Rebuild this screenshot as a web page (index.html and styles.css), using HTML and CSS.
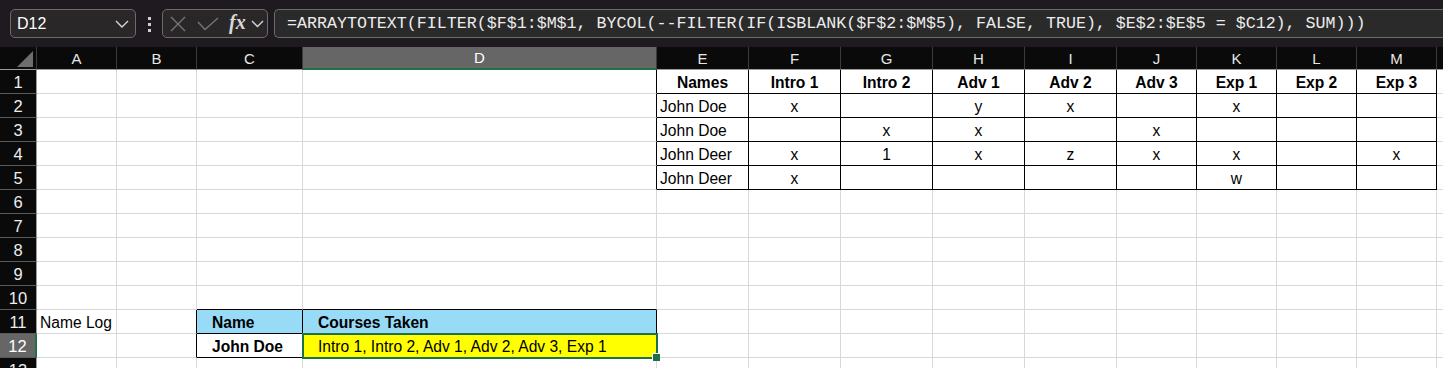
FILE: index.html
```html
<!DOCTYPE html>
<html lang="en">
<head>
    <meta charset="UTF-8">
    <title>Name Log</title>
    <link rel="stylesheet" href="styles.css">
</head>
<body>

    <div class="toolbar">
        <div class="namebox">
            <span>D12</span>
            <svg width="14" height="8" viewBox="0 0 14 8"><polyline points="1,1 7,7 13,1" fill="none" stroke="#d8d8d8" stroke-width="1.4"/></svg>
        </div>
        <div class="dots"><span></span><span></span><span></span></div>
        <div class="fnbox">
            <svg class="ico-x" width="16" height="16" viewBox="0 0 16 16"><path d="M1 1L15 15M15 1L1 15" stroke="#767676" stroke-width="1.4"/></svg>
            <svg class="ico-ok" width="22" height="14" viewBox="0 0 22 14"><polyline points="1,5 8,12.5 21,1" fill="none" stroke="#767676" stroke-width="1.4"/></svg>
            <span class="fx">fx</span>
            <svg width="13" height="8" viewBox="0 0 13 8"><polyline points="1,1 6.5,6.5 12,1" fill="none" stroke="#d8d8d8" stroke-width="1.4"/></svg>
        </div>
        <div class="formula">=ARRAYTOTEXT(FILTER($F$1:$M$1, BYCOL(--FILTER(IF(ISBLANK($F$2:$M$5), FALSE, TRUE), $E$2:$E$5 = $C12), SUM)))</div>
    </div>

    <div class="sheet" id="hoja"></div>

    <script>
        const letras = ["A", "B", "C", "D", "E", "F", "G", "H", "I", "J", "K", "L", "M", ""];
        const valores = {
            E1: "Names", F1: "Intro 1", G1: "Intro 2", H1: "Adv 1", I1: "Adv 2", J1: "Adv 3", K1: "Exp 1", L1: "Exp 2", M1: "Exp 3",
            E2: "John Doe", F2: "x", H2: "y", I2: "x", K2: "x",
            E3: "John Doe", G3: "x", H3: "x", J3: "x",
            E4: "John Deer", F4: "x", G4: "1", H4: "x", I4: "z", J4: "x", K4: "x", M4: "x",
            E5: "John Deer", F5: "x", K5: "w",
            A11: "Name Log", C11: "Name", D11: "Courses Taken",
            C12: "John Doe", D12: "Intro 1, Intro 2, Adv 1, Adv 2, Adv 3, Exp 1"
        };

        function clases(i, fila) {
            const lista = ["cell"];
            // tabla de cursos E1:M5
            if (fila >= 1 && fila <= 5) {
                if (i >= 4 && i <= 12) {
                    lista.push("box");
                    if (fila === 1) lista.push("bold", "center");
                    else if (i > 4) lista.push("center");
                }
                if (i === 3) lista.push("edge-r");
            }
            // tabla de registro C11:D12
            if (fila === 10 && (i === 2 || i === 3)) lista.push("edge-b");
            if (fila === 11 || fila === 12) {
                if (i === 1) lista.push("edge-r");
                if (i === 2 || i === 3) lista.push("box", "ind");
                if (fila === 11 && (i === 2 || i === 3)) lista.push("blue", "bold");
                if (fila === 12 && i === 2) lista.push("bold");
                if (fila === 12 && i === 3) lista.push("yellow", "sel");
            }
            return lista.join(" ");
        }

        function dibujarHoja() {
            const hoja = document.getElementById("hoja");
            let html = `<div class="colhead corner"></div>`;
            letras.forEach(l => {
                html += `<div class="colhead ${l === "D" ? "sel-col" : ""}">${l}</div>`;
            });
            for (let fila = 1; fila <= 13; fila++) {
                html += `<div class="rowhead ${fila === 12 ? "sel-row" : ""}">${fila}</div>`;
                letras.forEach((l, i) => {
                    const texto = valores[l + fila] || "";
                    html += `<div class="${clases(i, fila)}">${texto}</div>`;
                });
            }
            hoja.innerHTML = html;
        }

        dibujarHoja();
    </script>

</body>
</html>
```

FILE: styles.css
```css
* {
    box-sizing: border-box;
}
body {
    margin: 0;
    background-color: #fff;
    font-family: "Liberation Sans", Arial, sans-serif;
    overflow: hidden;
}
.toolbar {
    height: 47px;
    background-color: #1f1a1f;
    display: flex;
    align-items: flex-start;
    padding: 9px 0 0 10px;
}
.namebox {
    width: 126px;
    height: 29px;
    border: 1px solid #6b6b6b;
    border-radius: 5px;
    background-color: #2a2729;
    display: flex;
    align-items: center;
    justify-content: space-between;
    padding: 0 6px 0 6px;
    color: #fff;
    font-size: 16px;
}
.dots {
    margin-left: 12px;
    width: 4px;
    display: flex;
    flex-direction: column;
    gap: 3px;
    padding-top: 8px;
}
.dots span {
    width: 3px;
    height: 3px;
    background-color: #cfcfcf;
}
.fnbox {
    margin-left: 10px;
    width: 106px;
    height: 29px;
    border: 1px solid #6b6b6b;
    border-radius: 5px;
    background-color: #2a2729;
    display: flex;
    align-items: center;
    padding-left: 7px;
}
.ico-x {
    margin-right: 11px;
}
.ico-ok {
    margin-right: 10px;
}
.fx {
    font-family: "Liberation Serif", serif;
    font-style: italic;
    font-weight: bold;
    font-size: 20px;
    color: #d8d8d8;
    margin-right: 5px;
    margin-top: -3px;
}
.formula {
    margin-left: 6px;
    flex: 1;
    height: 29px;
    border: 1px solid #6b6b6b;
    border-right: none;
    border-radius: 5px 0 0 5px;
    background-color: #2a2a2a;
    padding-left: 12px;
    font-family: "Liberation Mono", monospace;
    font-size: 16.65px;
    line-height: 27px;
    color: #ececec;
    white-space: nowrap;
    overflow: hidden;
}
.sheet {
    display: grid;
    grid-template-columns: 37px 80px 80px 106px 354px 92px 92px 92px 92px 92px 80px 80px 80px 80px 1fr;
    grid-template-rows: 23px;
    grid-auto-rows: 24px;
}
.colhead {
    background-color: #0a0a0a;
    color: #e6e6e6;
    border-right: 1px solid #3c3c3c;
    border-bottom: 1px solid #9c9c9c;
    display: flex;
    align-items: center;
    justify-content: center;
    font-size: 15px;
}
.corner {
    position: relative;
}
.corner::after {
    content: "";
    position: absolute;
    right: 3px;
    bottom: 2px;
    width: 16px;
    height: 16px;
    background-color: #6e6e6e;
    clip-path: polygon(100% 0, 100% 100%, 0 100%);
}
.sel-col {
    background-color: #666;
    color: #fff;
    border-bottom: 2px solid #1e7145;
}
.rowhead {
    background-color: #0a0a0a;
    color: #eee;
    border-right: 1px solid #9c9c9c;
    border-bottom: 1px solid #5a5a5a;
    display: flex;
    align-items: center;
    justify-content: center;
    font-size: 16.5px;
    padding-top: 1px;
}
.sel-row {
    background-color: #666;
    color: #fff;
    border-right: 2px solid #1e7145;
}
.cell {
    border-right: 1px solid #d9d9d9;
    border-bottom: 1px solid #d9d9d9;
    display: flex;
    align-items: center;
    padding: 2px 3px 0 3px;
    font-size: 15.6px;
    color: #000;
    white-space: nowrap;
    overflow: hidden;
}
.box {
    border-right-color: #000;
    border-bottom-color: #000;
}
.edge-r {
    border-right-color: #000;
}
.edge-b {
    border-bottom-color: #000;
}
.center {
    justify-content: center;
}
.bold {
    font-weight: bold;
}
.ind {
    padding-left: 15px;
}
.blue {
    background-color: #97dbf7;
}
.yellow {
    background-color: #ffff00;
}
.sel {
    position: relative;
    z-index: 2;
    overflow: visible;
    outline: 2px solid #1e7145;
    outline-offset: -1px;
}
.sel::after {
    content: "";
    position: absolute;
    right: -4px;
    bottom: -4px;
    width: 7px;
    height: 7px;
    background-color: #1e7145;
    border-left: 1px solid #fff;
    border-top: 1px solid #fff;
}
```
